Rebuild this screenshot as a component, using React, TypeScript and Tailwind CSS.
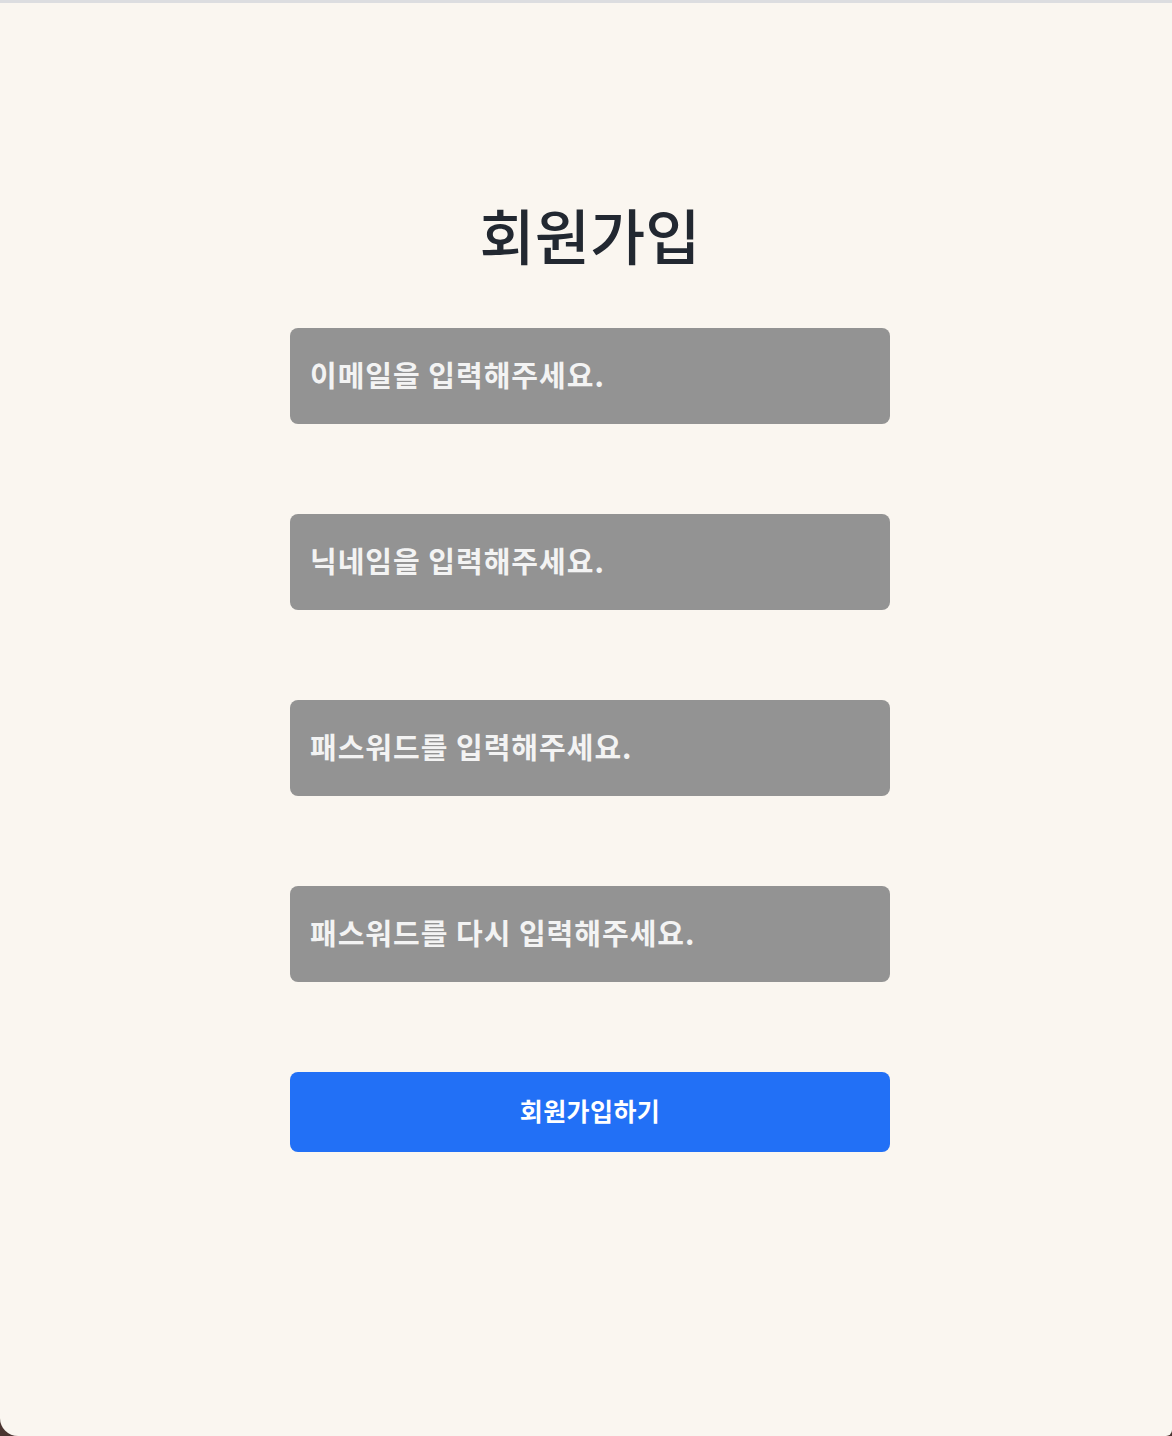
import React from "react";

const fields = [
  { type: "email", placeholder: "이메일을 입력해주세요." },
  { type: "text", placeholder: "닉네임을 입력해주세요." },
  { type: "password", placeholder: "패스워드를 입력해주세요." },
  { type: "password", placeholder: "패스워드를 다시 입력해주세요." },
];

const App = () => {
  return (
    <div className="w-[1172px] h-[1436px] bg-[#4a3430] overflow-hidden">
      <main
        className="h-full bg-[#faf6f0] border-t-[3px] border-[#dcdde0] rounded-bl-[18px] rounded-br-[6px] flex justify-center pl-[8px]"
        style={{ fontFamily: '"Noto Sans CJK KR", "Noto Sans", sans-serif' }}
      >
        {/* Sign-up form */}
        <section className="w-[600px] pt-[201px] flex flex-col">
          <h1 className="text-[60px] leading-[60px] font-medium text-[#222831] text-center mb-[64px]">
            회원가입
          </h1>

          <form className="flex flex-col gap-[90px]" onSubmit={(e) => e.preventDefault()}>
            {fields.map((f) => (
              <input
                key={f.placeholder}
                type={f.type}
                placeholder={f.placeholder}
                className="h-[96px] w-full rounded-lg bg-[#939393] px-5 pb-[4px] text-[29px] tracking-[1px] font-semibold text-white placeholder:text-[#f3f3f3] outline-none"
              />
            ))}
            <button
              type="submit"
              className="h-[80px] w-full rounded-lg bg-[#2270f6] text-white text-[25px] tracking-[0.4px] font-semibold pb-[2px]"
            >
              회원가입하기
            </button>
          </form>
        </section>
      </main>
    </div>
  );
};

export default App;
